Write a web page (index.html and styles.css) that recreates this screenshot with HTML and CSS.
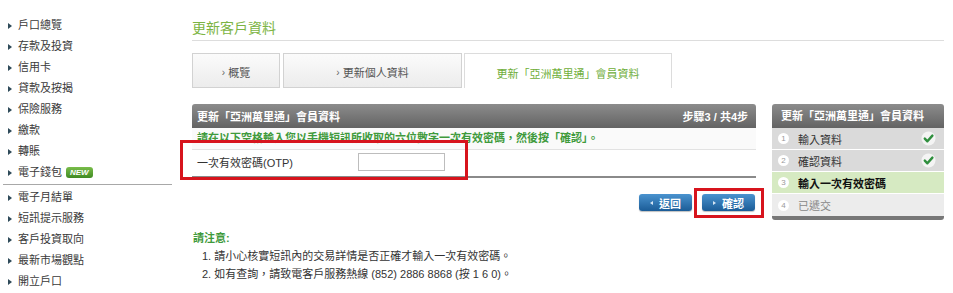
FILE: index.html
```html
<!DOCTYPE html>
<html lang="zh-Hant">
<head>
<meta charset="utf-8">
<title>更新客戶資料</title>
<link rel="stylesheet" href="styles.css">
</head>
<body>
<div class="page">
  <nav class="sidenav">
    <a class="nav-item">戶口總覽</a>
    <a class="nav-item">存款及投資</a>
    <a class="nav-item">信用卡</a>
    <a class="nav-item">貸款及按揭</a>
    <a class="nav-item">保險服務</a>
    <a class="nav-item">繳款</a>
    <a class="nav-item">轉賬</a>
    <a class="nav-item">電子錢包 <span class="badge-new">NEW</span></a>
    <div class="nav-divider"></div>
    <a class="nav-item">電子月結單</a>
    <a class="nav-item">短訊提示服務</a>
    <a class="nav-item">客戶投資取向</a>
    <a class="nav-item">最新市場觀點</a>
    <a class="nav-item">開立戶口</a>
  </nav>

  <main class="main">
    <h1 class="page-title">更新客戶資料</h1>

    <div class="tabs">
      <div class="tab tab-1"><span class="chev">›</span>概覽</div>
      <div class="tab tab-2"><span class="chev">›</span>更新個人資料</div>
      <div class="tab tab-3 active">更新「亞洲萬里通」會員資料</div>
    </div>

    <div class="panels">
      <section class="content">
        <div class="box-head">
          <span>更新「亞洲萬里通」會員資料</span>
          <span>步驟3 / 共4步</span>
        </div>
        <div class="instruction">請在以下空格輸入您以手機短訊所收取的六位數字一次有效密碼，然後按「確認」。</div>
        <div class="otp-row">
          <label class="otp-label">一次有效密碼(OTP)</label>
          <input class="otp-input" type="text">
        </div>
        <div class="highlight highlight-otp"></div>

        <div class="actions">
          <button class="btn btn-back"><span class="tri tri-left"></span>返回</button>
          <button class="btn btn-confirm"><span class="tri tri-right"></span>確認<span class="highlight highlight-btn"></span></button>
        </div>

        <div class="notes">
          <div class="notes-title">請注意:</div>
          <div class="note">1. 請小心核實短訊內的交易詳情是否正確才輸入一次有效密碼。</div>
          <div class="note">2. 如有查詢，請致電客戶服務熱線 (852) 2886 8868 (按 1 6 0)。</div>
        </div>
      </section>

      <aside class="steps">
        <div class="steps-head">更新「亞洲萬里通」會員資料</div>
        <div class="step done">
          <span class="num">1</span><span class="step-label">輸入資料</span>
          <svg class="check" width="15" height="15" viewBox="0 0 15 15"><circle cx="7.5" cy="7.5" r="7" fill="#f4f4f4"/><path d="M3.8 7.6 L6.4 10.3 L11.4 4.6" fill="none" stroke="#2f8f3e" stroke-width="2.4" stroke-linecap="round" stroke-linejoin="round"/></svg>
        </div>
        <div class="step done">
          <span class="num">2</span><span class="step-label">確認資料</span>
          <svg class="check" width="15" height="15" viewBox="0 0 15 15"><circle cx="7.5" cy="7.5" r="7" fill="#f4f4f4"/><path d="M3.8 7.6 L6.4 10.3 L11.4 4.6" fill="none" stroke="#2f8f3e" stroke-width="2.4" stroke-linecap="round" stroke-linejoin="round"/></svg>
        </div>
        <div class="step current">
          <span class="num">3</span><span class="step-label">輸入一次有效密碼</span>
        </div>
        <div class="step todo">
          <span class="num">4</span><span class="step-label">已遞交</span>
        </div>
        <div class="steps-foot"></div>
      </aside>
    </div>
  </main>
</div>
</body>
</html>
```

FILE: styles.css
```css
* { box-sizing: border-box; }

html, body {
  margin: 0;
  padding: 0;
  background: #ffffff;
}

body {
  font-family: "Liberation Sans", "Noto Sans CJK TC", sans-serif;
  font-size: 11px;
  color: #333333;
  width: 953px;
  height: 293px;
  overflow: hidden;
}

.page {
  display: flex;
  align-items: flex-start;
}

/* ---------- side navigation ---------- */
.sidenav {
  width: 180px;
  flex: none;
  padding-top: 15px;
  display: flex;
  flex-direction: column;
}

.nav-item {
  display: flex;
  align-items: center;
  height: 21px;
  line-height: 21px;
  padding-left: 8px;
  color: #3a3a3a;
  font-size: 11px;
}

.nav-item::before {
  content: "";
  width: 0;
  height: 0;
  border-left: 4px solid #2e4a59;
  border-top: 3px solid transparent;
  border-bottom: 3px solid transparent;
  margin-right: 6px;
  flex: none;
}

.badge-new {
  display: inline-block;
  margin-left: 4px;
  height: 11px;
  line-height: 11px;
  padding: 0 4px;
  border-radius: 3px;
  background: linear-gradient(#79bd4a, #3f8a22);
  color: #ffffff;
  font-size: 8px;
  font-weight: bold;
  font-style: italic;
}

.nav-divider {
  height: 1px;
  background: #a8a8a8;
  margin: 1px 8px 2px 3px;
}

/* ---------- main ---------- */
.main {
  width: 752px;
  margin-left: 12px;
  flex: none;
}

.page-title {
  margin: 0;
  padding-top: 18px;
  height: 41px;
  line-height: 20px;
  font-size: 14px;
  font-weight: normal;
  color: #7cb443;
  border-bottom: 1px solid #dddddd;
}

.tabs {
  display: flex;
  margin-top: 12px;
  height: 35px;
}

.tab {
  height: 35px;
  display: flex;
  align-items: center;
  justify-content: center;
  border: 1px solid #d2d2d2;
  background: linear-gradient(#fbfbfb, #ececec);
  color: #555555;
  font-size: 11px;
  padding-top: 3px;
}

.tab .chev {
  font-size: 10px;
  margin-right: 3px;
  color: #666666;
}

.tab-1 { width: 88px; margin-right: 3px; }
.tab-2 { width: 179px; margin-right: 2px; }
.tab-3 { width: 208px; }

.tab.active {
  background: #ffffff;
  border-color: #dcdcdc;
  border-bottom: none;
  color: #6fae3a;
}

.panels {
  display: flex;
  gap: 16px;
  margin-top: 16px;
}

/* ---------- content column ---------- */
.content {
  width: 564px;
  flex: none;
  position: relative;
}

.box-head {
  height: 24px;
  display: flex;
  align-items: center;
  justify-content: space-between;
  padding: 0 8px 0 5px;
  background: linear-gradient(#8c8c8c, #636363);
  border-radius: 3px 3px 0 0;
  color: #ffffff;
  font-weight: bold;
}

.instruction {
  height: 22px;
  line-height: 21px;
  padding-left: 5px;
  background: #fafafa;
  border-bottom: 1px solid #e2e2e2;
  color: #3f9a3c;
  font-weight: bold;
}

.otp-row {
  height: 28px;
  display: flex;
  align-items: center;
  padding-left: 5px;
  padding-bottom: 2px;
  border-bottom: 2px solid #8a8a8a;
}

.otp-label {
  width: 161px;
  color: #333333;
}

.otp-input {
  width: 87px;
  height: 18px;
  border: 1px solid #bdbdbd;
  padding: 0;
  margin: 0;
  background: #ffffff;
}

.highlight {
  position: absolute;
  border: 3px solid #d7141d;
  pointer-events: none;
}

.highlight-otp {
  left: -12px;
  top: 36px;
  width: 288px;
  height: 40px;
}

.actions {
  display: flex;
  justify-content: flex-end;
  gap: 10px;
  margin-top: 16px;
  padding-right: 1px;
}

.btn {
  position: relative;
  width: 53px;
  height: 17px;
  padding: 0;
  border: none;
  border-radius: 3px;
  background: linear-gradient(#4a93cf, #1b5c97);
  color: #ffffff;
  font-family: inherit;
  font-size: 11px;
  font-weight: bold;
  display: flex;
  align-items: center;
  justify-content: center;
  box-shadow: 0 1px 1px rgba(0, 0, 0, 0.25);
}

.tri {
  width: 0;
  height: 0;
  border-top: 2.5px solid transparent;
  border-bottom: 2.5px solid transparent;
  margin-right: 6px;
}

.tri-left { border-right: 3px solid #d6e6f4; }
.tri-right { border-left: 3px solid #d6e6f4; }

.highlight-btn {
  left: -8px;
  top: -6px;
  right: -9px;
  bottom: -7px;
}

.notes {
  margin-top: 18px;
}

.notes-title {
  height: 18px;
  line-height: 18px;
  padding-left: 1px;
  color: #3f9a3c;
  font-weight: bold;
}

.note {
  height: 18px;
  line-height: 18px;
  padding-left: 10px;
  color: #333333;
}

/* ---------- steps ---------- */
.steps {
  width: 172px;
  flex: none;
}

.steps-head {
  height: 24px;
  line-height: 24px;
  padding-left: 9px;
  background: linear-gradient(#8c8c8c, #636363);
  border-radius: 3px 3px 0 0;
  color: #ffffff;
  font-weight: bold;
  white-space: nowrap;
}

.step {
  height: 22px;
  display: flex;
  align-items: center;
  padding-left: 6px;
  padding-right: 8px;
  border-bottom: 1px solid #ffffff;
  background: #dadada;
  color: #333333;
}

.step.current {
  background: #d6eac2;
  color: #111111;
  font-weight: bold;
}

.step.todo {
  background: #ececec;
  color: #888888;
  border-bottom: none;
}

.num {
  width: 11px;
  height: 11px;
  border-radius: 50%;
  background: #ffffff;
  color: #9a9a9a;
  font-size: 8px;
  font-weight: normal;
  line-height: 11px;
  text-align: center;
  margin-right: 9px;
  flex: none;
}

.step-label {
  flex: 1;
}

.check {
  flex: none;
}

.steps-foot {
  height: 4px;
  background: #777777;
  border-radius: 0 0 3px 3px;
}
```
